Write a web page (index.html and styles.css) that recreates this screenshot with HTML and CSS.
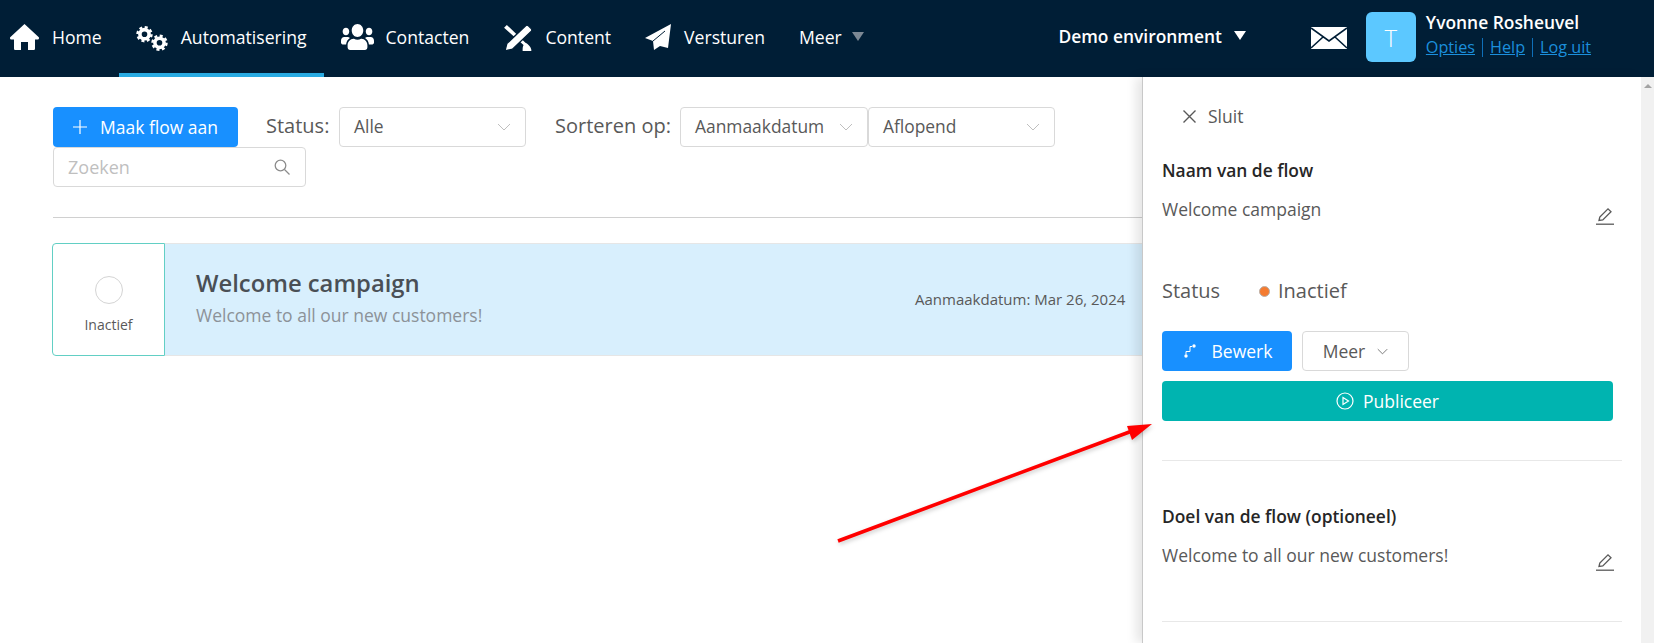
FILE: index.html
```html
<!DOCTYPE html>
<html lang="nl">
<head>
<meta charset="utf-8">
<title>Flows</title>
<link rel="stylesheet" href="styles.css">
</head>
<body>
<header class="nav">
  <a class="nav-item first"><svg class="i-home" viewBox="0 0 29 26"><path d="M14.5 0 28.8 13.3c.6 1-.2 2.2-1.3 2.2H25v9c0 1-.7 1.5-1.5 1.5H18v-8h-7v8H5.5C4.7 26 4 25.5 4 24.5v-9H1.5C.4 15.5-.4 14.3.2 13.3z"/></svg><span>Home</span></a>
  <a class="nav-item active"><svg class="i-cogs" viewBox="0 0 32 25"><g fill="none" stroke="#fff"><circle cx="8.5" cy="8.2" r="4.6" stroke-width="3.6"/><circle cx="8.5" cy="8.2" r="7" stroke-width="2.4" stroke-dasharray="3 2.5"/><circle cx="23.5" cy="16.8" r="4.6" stroke-width="3.6"/><circle cx="23.5" cy="16.8" r="7" stroke-width="2.4" stroke-dasharray="3 2.5"/></g></svg><span>Automatisering</span></a>
  <a class="nav-item"><svg class="i-users" viewBox="0 32 640 448" preserveAspectRatio="none"><path d="M96 224c35.3 0 64-28.7 64-64s-28.7-64-64-64-64 28.7-64 64 28.7 64 64 64zm448 0c35.3 0 64-28.7 64-64s-28.7-64-64-64-64 28.7-64 64 28.7 64 64 64zm32 32h-64c-17.6 0-33.5 7.1-45.1 18.6 40.3 22.1 68.9 62 75.1 109.4h66c17.7 0 32-14.3 32-32v-32c0-35.3-28.7-64-64-64zm-256 0c61.9 0 112-50.1 112-112S381.9 32 320 32 208 82.1 208 144s50.1 112 112 112zm76.8 32h-8.3c-20.8 10-43.9 16-68.5 16s-47.6-6-68.5-16h-8.3C179.6 288 128 339.6 128 403.2V432c0 26.500 21.500 48 48 48h288c26.500 0 48-21.500 48-48v-28.8c0-63.6-51.6-115.2-115.2-115.2zm-223.7-13.4C161.5 263.1 145.6 256 128 256H64c-35.3 0-64 28.7-64 64v32c0 17.7 14.3 32 32 32h65.9c6.3-47.4 34.9-87.3 75.2-109.4z"/></svg><span>Contacten</span></a>
  <a class="nav-item"><svg class="i-content" viewBox="0 0 30 28"><path d="M0 3 3 0 23 19c3 1.500 6.500 5 6.500 8.500 0 .4-.3.5-.6.5H20c0-3 0-5 1-6.500z"/><path d="M23 1c1-1 2.300-1 3.200-.1l3 3c.9.9.9 2.200-.1 3.200L9 26 1 28l2-8z" stroke="#001e36" stroke-width="1.400"/></svg><span>Content</span></a>
  <a class="nav-item plane"><svg class="i-plane" viewBox="0 0 26 26"><path d="M26 0 0 14l8 3 1 9 6-4 8 2z"/><path d="M8 17 20 7" stroke="#001e36" stroke-width="1" fill="none"/></svg><span>Versturen</span></a>
  <a class="nav-item more"><span>Meer</span><i class="caret caret-grey"></i></a>
  <div class="env"><span>Demo environment</span><i class="caret caret-white"></i></div>
  <svg class="i-mail" viewBox="0 0 36 22"><rect width="36" height="22" fill="#fff"/><path d="M0 1 18 14 36 1M0 21l12-11M36 21 24 10" fill="none" stroke="#001e36" stroke-width="1.600"/></svg>
  <div class="avatar">T</div>
  <div class="user">
    <div class="user-name">Yvonne Rosheuvel</div>
    <div class="user-links"><a>Opties</a><i></i><a>Help</a><i></i><a>Log uit</a></div>
  </div>
</header>

<main class="main">
  <div class="toolbar">
    <button class="btn btn-primary btn-create"><svg class="i-plus" viewBox="0 0 14 14"><path d="M7 0v14M0 7h14"/></svg>Maak flow aan</button>
    <span class="tb-label tb-status">Status:</span>
    <div class="select s-status"><span>Alle</span><svg class="chev" viewBox="0 0 14 8"><path d="M1 1l6 6 6-6"/></svg></div>
    <span class="tb-label tb-sort">Sorteren op:</span>
    <div class="select s-sort"><span>Aanmaakdatum</span><svg class="chev" viewBox="0 0 14 8"><path d="M1 1l6 6 6-6"/></svg></div>
    <div class="select s-order"><span>Aflopend</span><svg class="chev" viewBox="0 0 14 8"><path d="M1 1l6 6 6-6"/></svg></div>
    <div class="select s-search"><span class="placeholder">Zoeken</span><svg class="i-search" viewBox="0 0 16 16"><circle cx="6.500" cy="6.500" r="5.300"/><path d="M10.500 10.500 15.500 15.500"/></svg></div>
  </div>
  <hr class="rule">
  <article class="card">
    <div class="card-status"><span class="ring"></span><span class="card-status-text">Inactief</span></div>
    <div class="card-body">
      <div class="card-text">
        <div class="card-title">Welcome campaign</div>
        <div class="card-sub">Welcome to all our new customers!</div>
      </div>
      <div class="card-date">Aanmaakdatum: Mar 26, 2024</div>
    </div>
  </article>
</main>

<aside class="drawer">
  <div class="close"><svg class="i-x" viewBox="0 0 13 13"><path d="M.5.5l12 12M12.500.5l-12 12"/></svg><span>Sluit</span></div>
  <h3 class="d-head d-head-first">Naam van de flow</h3>
  <div class="d-value"><span>Welcome campaign</span><svg class="i-pencil" viewBox="0 0 18 18"><path d="M3 13.500 3.800 10 12 1.800l3 3L6.800 13z"/><path d="M0 17.200h18"/></svg></div>
  <div class="d-status"><span class="d-status-label">Status</span><i class="dot"></i><span class="d-status-val">Inactief</span></div>
  <div class="d-actions">
    <button class="btn btn-primary btn-edit"><svg class="i-flow" viewBox="0 0 12 14"><circle cx="10" cy="2" r="1.700" fill="#fff"/><circle cx="2" cy="12" r="1.700" fill="#fff"/><path d="M8 2.500H6v5H2v3" fill="none" stroke="#fff"/></svg>Bewerk</button>
    <button class="btn btn-default btn-more">Meer<svg class="chev chev-small" viewBox="0 0 14 8"><path d="M1 1l6 6 6-6"/></svg></button>
  </div>
  <button class="btn btn-publish"><svg class="i-play" viewBox="0 0 18 18"><circle cx="9" cy="9" r="8"/><path d="M7 5.500 12.500 9 7 12.500z"/></svg>Publiceer</button>
  <hr class="d-rule d-rule-1">
  <h3 class="d-head d-head-second">Doel van de flow (optioneel)</h3>
  <div class="d-value"><span>Welcome to all our new customers!</span><svg class="i-pencil" viewBox="0 0 18 18"><path d="M3 13.500 3.800 10 12 1.800l3 3L6.800 13z"/><path d="M0 17.200h18"/></svg></div>
  <hr class="d-rule d-rule-2">
</aside>

<div class="scrollbar"><i></i></div>

<svg class="arrow" viewBox="0 0 330 135"><path d="M8 126 302 16" stroke="#f00" stroke-width="3.600" fill="none"/><path d="M322 9 297 11 302 25z" fill="#f00"/></svg>
</body>
</html>
```
FILE: styles.css
```css
* { box-sizing: border-box; }
html, body { margin: 0; height: 643px; overflow: hidden; background: #fff; }
body { font-family: "Open Sans", "Noto Sans", sans-serif; color: #595959; position: relative; }

/* top navigation */
.nav { display: flex; align-items: stretch; height: 77px; padding-right: 63px; background: #001e36; color: #fff; font-size: 17.6px; }
.nav-item { display: flex; align-items: center; gap: 12px; padding: 0 17px; border-bottom: 4px solid transparent; }
.nav-item.first { padding-left: 10px; gap: 13px; }
.nav-item.active { border-bottom-color: #29abe2; gap: 13px; }
.nav-item.plane { gap: 13px; }
.nav-item svg { fill: #fff; display: block; flex: none; }
.i-home { width: 29px; height: 26px; }
.i-cogs { width: 32px; height: 25px; margin-top: 4px; }
.i-users { width: 33px; height: 26px; }
.i-content { width: 30px; height: 26px; margin-top: 2px; }
.i-plane { width: 26px; height: 26px; }
.more { gap: 10px; }
.caret { display: block; width: 0; height: 0; border-left: 6.5px solid transparent; border-right: 6.5px solid transparent; border-top: 9px solid; }
.caret-grey { border-top-color: #7c8894; }
.caret-white { border-top-color: #fff; margin-top: -2px; }
.env { display: flex; align-items: center; gap: 12px; margin-left: auto; font-size: 17.4px; font-weight: 600; padding-bottom: 5px; }
.i-mail { width: 36px; height: 22px; align-self: center; margin-left: 65px; margin-bottom: 1px; }
.avatar { width: 50px; height: 50px; align-self: center; margin-left: 19px; margin-bottom: 3px; border-radius: 6px; background: #5cc8ff; color: #fff; font-size: 24px; font-weight: 300; display: flex; align-items: center; justify-content: center; }
.user { margin-left: 10px; align-self: center; margin-bottom: 9px; }
.user-name { font-size: 17.4px; font-weight: 600; line-height: 24px; }
.user-links { display: flex; align-items: center; font-size: 16.2px; line-height: 22px; color: #1b8fdc; margin-top: 2px; }
.user-links a { text-decoration: underline; }
.user-links i { display: block; width: 1px; height: 19px; margin: 0 7px; background: #0f6fb8; }

/* main list */
.main { padding: 30px 0 0 53px; }
.toolbar { display: flex; flex-wrap: wrap; align-items: center; width: 1089px; }
.btn { display: inline-flex; align-items: center; justify-content: center; height: 40px; border: 0; border-radius: 4px; font: inherit; font-size: 17.5px; cursor: pointer; }
.btn-primary { background: #1890ff; color: #fff; }
.btn-create { width: 185px; gap: 13px; font-weight: 500; padding-bottom: 1px; }
.i-plus { width: 14px; height: 14px; fill: none; stroke: #fff; stroke-width: 1.2; }
.tb-label { font-size: 20px; color: #595959; padding-bottom: 3px; }
.tb-status { margin-left: 28px; width: 73px; }
.tb-sort { margin-left: 29px; width: 125px; }
.select { display: flex; align-items: center; justify-content: space-between; height: 40px; border: 1px solid #d9d9d9; border-radius: 4px; padding: 0 14px; font-size: 17.4px; background: #fff; }
.select span { padding-bottom: 2px; }
.s-status { width: 187px; }
.s-sort { width: 188px; }
.s-order { width: 187px; }
.s-search { width: 253px; padding-right: 15px; }
.s-search span { padding-bottom: 0; }
.placeholder { color: #bfbfbf; font-size: 18px; }
.chev { width: 14px; height: 8px; fill: none; stroke: #bfbfbf; stroke-width: 1; display: block; }
.i-search { width: 16px; height: 16px; fill: none; stroke: #8c8c8c; stroke-width: 1.3; display: block; }
.rule { margin: 30px 0 25px; border: 0; border-top: 1px solid #d0d0d0; }

.card { display: flex; height: 113px; margin-left: -1px; }
.card-status { width: 113px; flex: none; border: 1px solid #62cfc4; border-radius: 4px 0 0 4px; display: flex; flex-direction: column; align-items: center; padding-top: 32px; background: #fff; }
.ring { width: 28px; height: 28px; border-radius: 50%; border: 1px solid #d4d4d4; }
.card-status-text { font-size: 14px; line-height: 18px; margin-top: 12px; }
.card-body { flex: 1; display: flex; justify-content: flex-start; background: #d8effd; border-top: 1px solid #e6e6e6; border-bottom: 1px solid #e6e6e6; padding-left: 31px; }
.card-text { width: 719px; padding-top: 24px; }
.card-title { font-size: 23.8px; line-height: 30px; font-weight: 600; color: #4a4f55; }
.card-sub { font-size: 17.5px; line-height: 24px; margin-top: 5px; color: #8c9298; }
.card-date { font-size: 15px; line-height: 18px; margin-top: 46px; color: #595959; white-space: nowrap; }

/* side drawer, lies over the list */
.drawer { position: absolute; top: 77px; bottom: 0; left: 1142px; width: 499px; background: #fff; border-left: 1px solid #c8c8c8; box-shadow: -6px 0 10px rgba(0,0,0,.10); padding: 27px 19px 0 19px; }
.close { display: flex; align-items: center; gap: 12px; height: 24px; margin-left: 21px; font-size: 17.5px; }
.i-x { width: 13px; height: 13px; stroke: #595959; stroke-width: 1.4; fill: none; display: block; }
.d-head { margin: 0; font-size: 17.4px; line-height: 24px; font-weight: 600; color: #262626; }
.d-head-first { margin-top: 30px; }
.d-head-second { margin-top: 43px; }
.d-value { display: flex; justify-content: space-between; align-items: flex-start; height: 24px; margin-top: 15px; padding-right: 8px; font-size: 17.5px; line-height: 24px; }
.i-pencil { width: 18px; height: 18px; margin-top: 10px; fill: none; stroke: #595959; stroke-width: 1.3; display: block; }
.d-status { display: flex; align-items: center; height: 26px; margin-top: 57px; font-size: 20px; }
.d-status span { padding-bottom: 2px; }
.d-status-label { width: 97px; }
.dot { width: 11px; height: 11px; border-radius: 50%; background: #f47b30; border: 1px solid #b9b0aa; margin-right: 8px; }
.d-actions { display: flex; gap: 10px; margin-top: 27px; }
.btn-edit { width: 130px; gap: 16px; padding-left: 8px; }
.i-flow { width: 12px; height: 14px; display: block; }
.btn-default { background: #fff; border: 1px solid #d9d9d9; color: #595959; }
.btn-more { width: 107px; gap: 12px; }
.chev-small { width: 11px; height: 7px; stroke: #595959; }
.btn-publish { display: flex; width: 451px; margin-top: 10px; gap: 9px; background: #00b4b0; color: #fff; }
.i-play { width: 18px; height: 18px; fill: none; stroke: #fff; stroke-width: 1.2; display: block; }
.d-rule { border: 0; border-top: 1px solid #e8e8e8; margin: 0; width: 460px; }
.d-rule-1 { margin-top: 39px; }
.d-rule-2 { margin-top: 54px; }

.scrollbar { position: absolute; top: 77px; bottom: 0; right: 0; width: 13px; background: #f1f1f1; }
.scrollbar i { display: block; width: 0; height: 0; margin: 7px auto 0; border-left: 4px solid transparent; border-right: 4px solid transparent; border-bottom: 4px solid #a3a3a3; }

.arrow { position: absolute; left: 830px; top: 415px; width: 330px; height: 135px; filter: drop-shadow(1px 2px 2px rgba(0,0,0,.2)); pointer-events: none; }
```
